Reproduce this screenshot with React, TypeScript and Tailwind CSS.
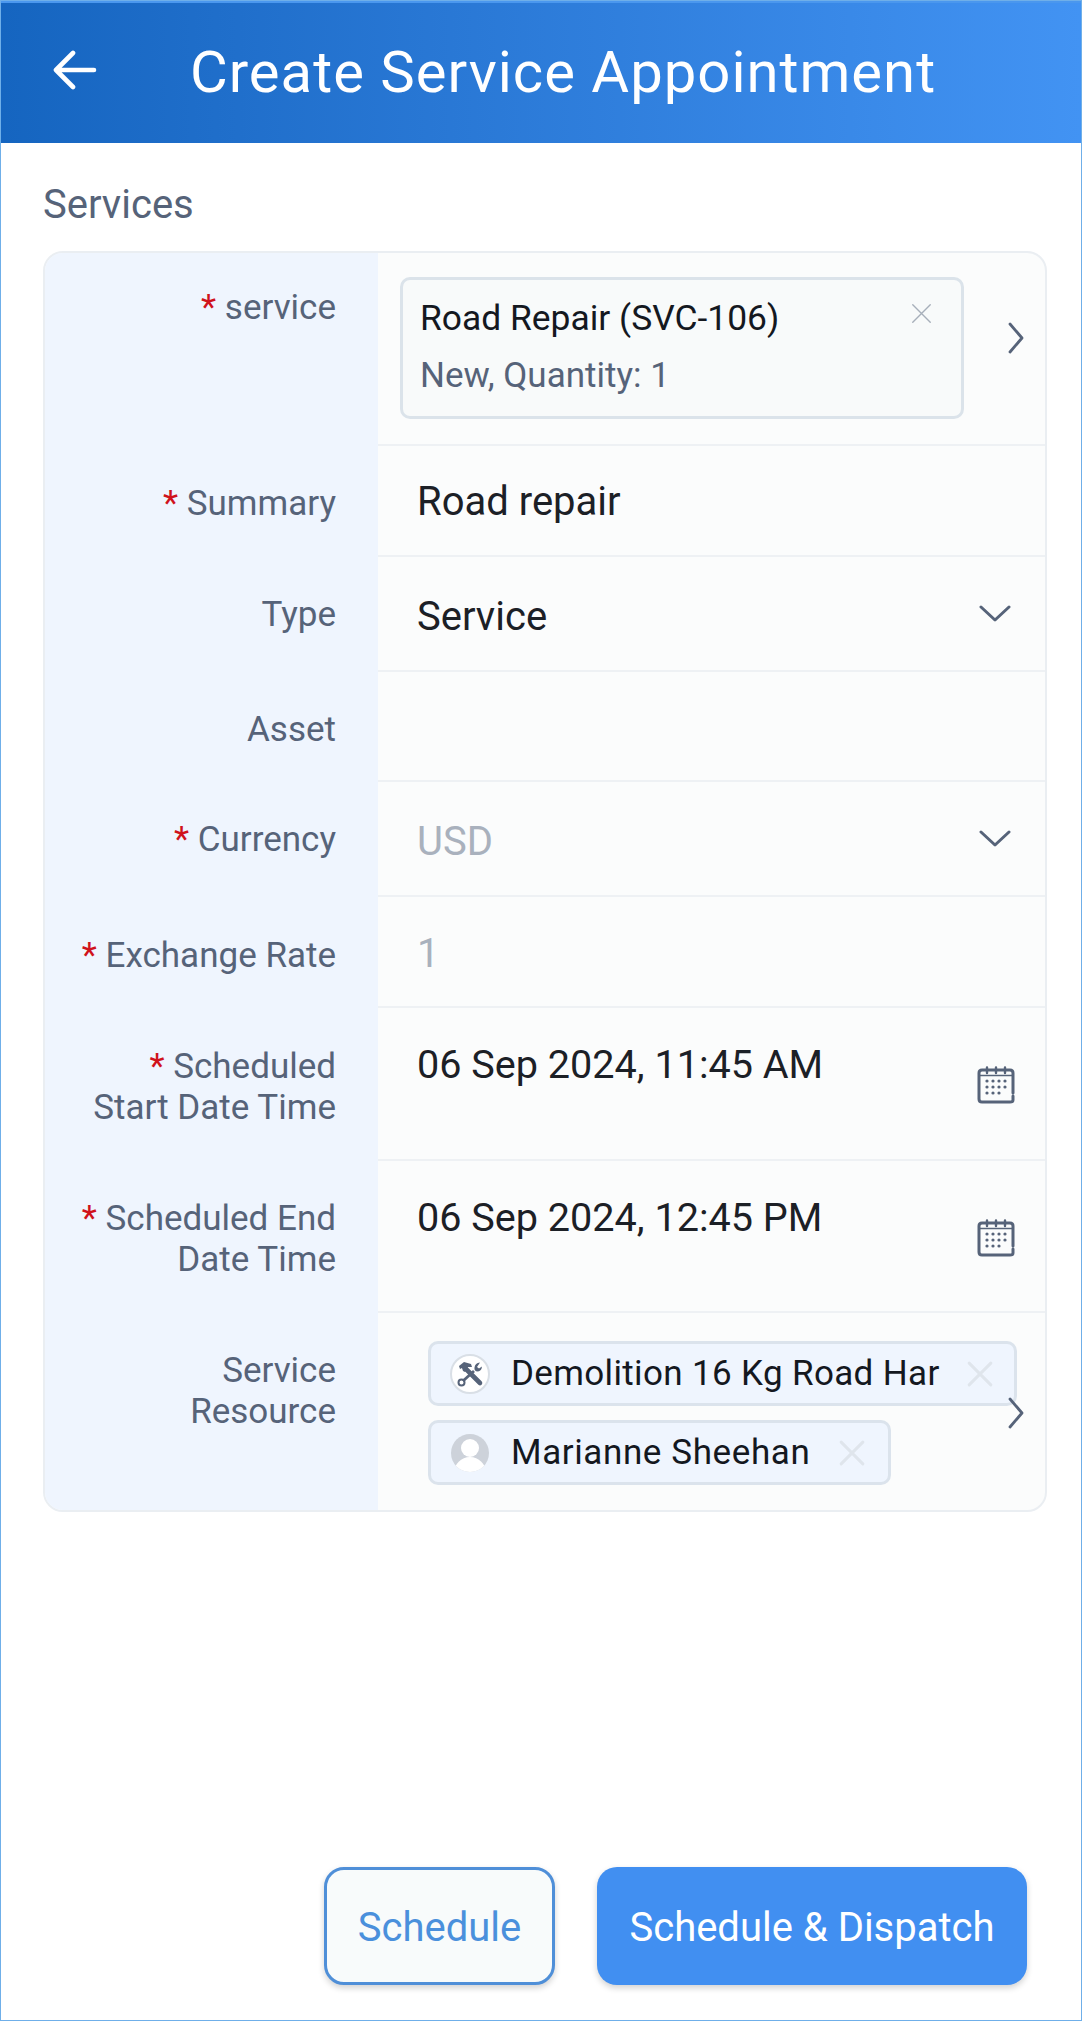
import React from "react";

const ff = "font-['Roboto',sans-serif]";

function Chevron({ className }: { className?: string }) {
  return (
    <svg viewBox="0 0 20 32" className={className} fill="none" stroke="#566379" strokeWidth="2.8" strokeLinecap="round" strokeLinejoin="round">
      <path d="M4 2 L16 16 L4 30" />
    </svg>
  );
}

function ChevronDown() {
  return (
    <svg viewBox="0 0 32 20" className="w-[32px] h-[20px]" fill="none" stroke="#566379" strokeWidth="3" strokeLinecap="round" strokeLinejoin="round">
      <path d="M2 3 L16 16 L30 3" />
    </svg>
  );
}

function Close({ className, color, width = 2.2 }: { className?: string; color: string; width?: number }) {
  return (
    <svg viewBox="0 0 24 24" className={className} fill="none" stroke={color} strokeWidth={width} strokeLinecap="round">
      <path d="M2 2 L22 22 M22 2 L2 22" />
    </svg>
  );
}

function CalendarIcon() {
  const dots: React.ReactNode[] = [];
  [15, 21, 27].forEach((y) =>
    [9, 15, 21, 27].forEach((x) => {
      if (y === 27 && x === 27) return;
      dots.push(<circle key={`${x}-${y}`} cx={x + 1} cy={y} r="1.6" fill="#566379" />);
    })
  );
  return (
    <svg viewBox="0 0 38 38" className="w-[38px] h-[38px]" fill="none" stroke="#566379" strokeWidth="3" strokeLinecap="round" strokeLinejoin="round">
      <path d="M36 30 V34 Q36 36 33 36 H5 Q2 36 2 33 V7 Q2 4 5 4 H33 Q36 4 36 7 V27" />
      <path d="M10 1.5 V7 M19 1.5 V7 M28 1.5 V7" strokeWidth="2.4" />
      <path d="M2 9.5 H36" strokeWidth="1.4" />
      <g stroke="none">{dots}</g>
    </svg>
  );
}

function ToolsAvatar() {
  return (
    <div className="w-[40px] h-[40px] rounded-full bg-white border-2 border-[#d9dfe6] flex items-center justify-center">
      <svg viewBox="0 0 28 28" className="w-[28px] h-[28px]" fill="none">
        <path d="M9 8 L24 23" stroke="#566379" strokeWidth="4.6" strokeLinecap="round" />
        <path d="M3 6 L8 2 L15 4 L16 7 L12 7 L9 12 L7 11 L6 8 L4 9 Z" fill="#566379" />
        <path d="M18 11 L7 21" stroke="#566379" strokeWidth="2.8" />
        <circle cx="5.5" cy="22.5" r="3" stroke="#566379" strokeWidth="2" />
        <path d="M24 2.5 Q19 3 18.5 7.5 Q18 11 21 11.5 Q25.5 11.5 26 6.5 L23 8.5 L21 7 Z" fill="#566379" />
      </svg>
    </div>
  );
}

function UserAvatar() {
  return (
    <div className="ml-[1px] w-[38px] h-[38px] rounded-full bg-[#cdd2da] overflow-hidden relative">
      <div className="absolute left-[10px] top-[5px] w-[18px] h-[18px] rounded-full bg-white" />
      <div className="absolute left-[3px] top-[23px] w-[32px] h-[26px] rounded-t-[16px] bg-white" />
    </div>
  );
}

function Label({ star, lines, pt }: { star?: boolean; lines: string[]; pt: string }) {
  return (
    <div className={`w-[333px] shrink-0 bg-[#eff5fe] pr-[42px] ${pt} text-right text-[35px] leading-[41px] text-[#566379]`}>
      {lines.map((l, i) => (
        <div key={i}>
          {star && i === 0 && <span className="text-[#d0121b]">* </span>}
          {l}
        </div>
      ))}
    </div>
  );
}

function Row({ h, star, lines, last, pt = "pt-[37px]", children }: { h: string; star?: boolean; lines: string[]; last?: boolean; pt?: string; children: React.ReactNode }) {
  return (
    <div className={`flex ${h}`}>
      <Label star={star} lines={lines} pt={pt} />
      <div className={`relative flex-1 min-w-0 ${last ? "" : "border-b-2 border-[#eef1f4]"}`}>{children}</div>
    </div>
  );
}

function Value({ children, muted, pt = "pt-[34px]", size = "text-[40px]" }: { children: React.ReactNode; muted?: boolean; pt?: string; size?: string }) {
  return (
    <div className={`pl-[39px] ${pt} ${size} leading-[44px] ${muted ? "text-[#a9b1bd]" : "text-[#1c2026]"}`}>{children}</div>
  );
}

function DropdownValue({ children, muted }: { children: React.ReactNode; muted?: boolean }) {
  return (
    <div className="flex items-start justify-between pr-[34px]">
      <Value muted={muted} pt="pt-[38px]">{children}</Value>
      <div className="pt-[47px]"><ChevronDown /></div>
    </div>
  );
}

function DateValue({ children }: { children: React.ReactNode }) {
  return (
    <div className="flex items-start justify-between pr-[30px]">
      <Value pt="pt-[35px]" size="text-[39.6px]">{children}</Value>
      <div className="pt-[58px]"><CalendarIcon /></div>
    </div>
  );
}

function ResourceChip({ avatar, name, w, closeGap, track }: { avatar: React.ReactNode; name: string; w: string; closeGap: string; track: string }) {
  return (
    <div className={`${w} h-[65px] rounded-[10px] border-[3px] border-[#dbe3ec] bg-[#eff5fe] flex items-center pl-[19px]`}>
      <div className="shrink-0 w-[40px]">{avatar}</div>
      <div className={`ml-[21px] text-[35px] leading-[40px] text-[#14181f] whitespace-nowrap ${track}`}>{name}</div>
      <Close className={`${closeGap} w-[26px] h-[26px] shrink-0`} color="#dfe5ec" width={2.8} />
    </div>
  );
}

export default function App() {
  return (
    <div className={`${ff} w-[1082px] h-[2021px] bg-white border border-[#6fafe9] flex flex-col overflow-hidden`}>
      <header className="h-[142px] shrink-0 bg-gradient-to-r from-[#1565c0] to-[#4293f3] flex items-center border-t-2 border-[#4a97ee]">
        <svg viewBox="0 0 44 44" className="ml-[52px] w-[44px] h-[44px] -mt-[6px]" fill="none" stroke="#fff" strokeWidth="4.6" strokeLinecap="round" strokeLinejoin="round">
          <path d="M41 22 H4 M20 5 L3 22 L20 39" />
        </svg>
        <h1 className="ml-[93px] text-[58px] leading-[64px] text-white font-normal tracking-[1px] -mt-[3px]">Create Service Appointment</h1>
      </header>

      <div className="pl-[42px] pr-[34px] flex-1 flex flex-col">
        <div className="pt-[40px] text-[40px] leading-[44px] text-[#566379]">Services</div>
        <div className="mt-[24px] rounded-[20px] border-2 border-[#eaeef2] bg-[#fbfcfc] overflow-hidden">
          <Row h="h-[193px]" star lines={["service"]} pt="pt-[34px]">
            <div className="flex items-center pl-[22px] pt-[24px]">
              <div className="relative w-[564px] h-[142px] rounded-[10px] border-[3px] border-[#dbe3ea] bg-[#f8fafa] pl-[17px] pt-[16px]">
                <div className="text-[35.4px] leading-[44px] text-[#14181f]">Road Repair (SVC-106)</div>
                <div className="mt-[14px] text-[35px] leading-[44px] text-[#566379]">New, Quantity: 1</div>
                <Close className="absolute right-[29px] top-[23px] w-[21px] h-[21px]" color="#a7afba" width={1.6} />
              </div>
              <Chevron className="ml-[42px] -mt-[20px] w-[20px] h-[32px]" />
            </div>
          </Row>
          <Row h="h-[111px]" star lines={["Summary"]}>
            <Value>Road repair</Value>
          </Row>
          <Row h="h-[115px]" lines={["Type"]}>
            <DropdownValue>Service</DropdownValue>
          </Row>
          <Row h="h-[110px]" lines={["Asset"]}>
            <div />
          </Row>
          <Row h="h-[115px]" star lines={["Currency"]}>
            <DropdownValue muted>USD</DropdownValue>
          </Row>
          <Row h="h-[111px]" star lines={["Exchange Rate"]} pt="pt-[38px]">
            <Value muted pt="pt-[35px]">1</Value>
          </Row>
          <Row h="h-[153px]" star lines={["Scheduled", "Start Date Time"]} pt="pt-[38px]">
            <DateValue>06 Sep 2024, 11:45 AM</DateValue>
          </Row>
          <Row h="h-[152px]" star lines={["Scheduled End", "Date Time"]}>
            <DateValue>06 Sep 2024, 12:45 PM</DateValue>
          </Row>
          <Row h="h-[197px]" lines={["Service", "Resource"]} last>
            <div className="pl-[50px] pt-[28px] flex flex-col gap-[14px]">
              <ResourceChip avatar={<ToolsAvatar />} name="Demolition 16 Kg Road Har" w="w-[589px]" closeGap="ml-[27px]" track="tracking-[0.35px]" />
              <ResourceChip avatar={<UserAvatar />} name="Marianne Sheehan" w="w-[463px]" closeGap="ml-[29px]" track="tracking-[0.6px]" />
            </div>
            <Chevron className="absolute right-[19px] top-[84px] w-[20px] h-[32px]" />
          </Row>
        </div>

        <div className="mt-auto pb-[35px] flex justify-end gap-[42px] pr-[20px]">
          <button className="w-[231px] h-[118px] pt-[4px] rounded-[20px] border-[3px] border-[#4f8fd8] bg-[#f8fbfb] text-[40px] text-[#4a90dc] shadow-[0_3px_6px_rgba(0,0,0,0.18)]">Schedule</button>
          <button className="w-[430px] h-[118px] pt-[4px] rounded-[20px] bg-[#418ff1] text-[40px] text-white shadow-[0_3px_6px_rgba(0,0,0,0.18)]">Schedule &amp; Dispatch</button>
        </div>
      </div>
    </div>
  );
}
